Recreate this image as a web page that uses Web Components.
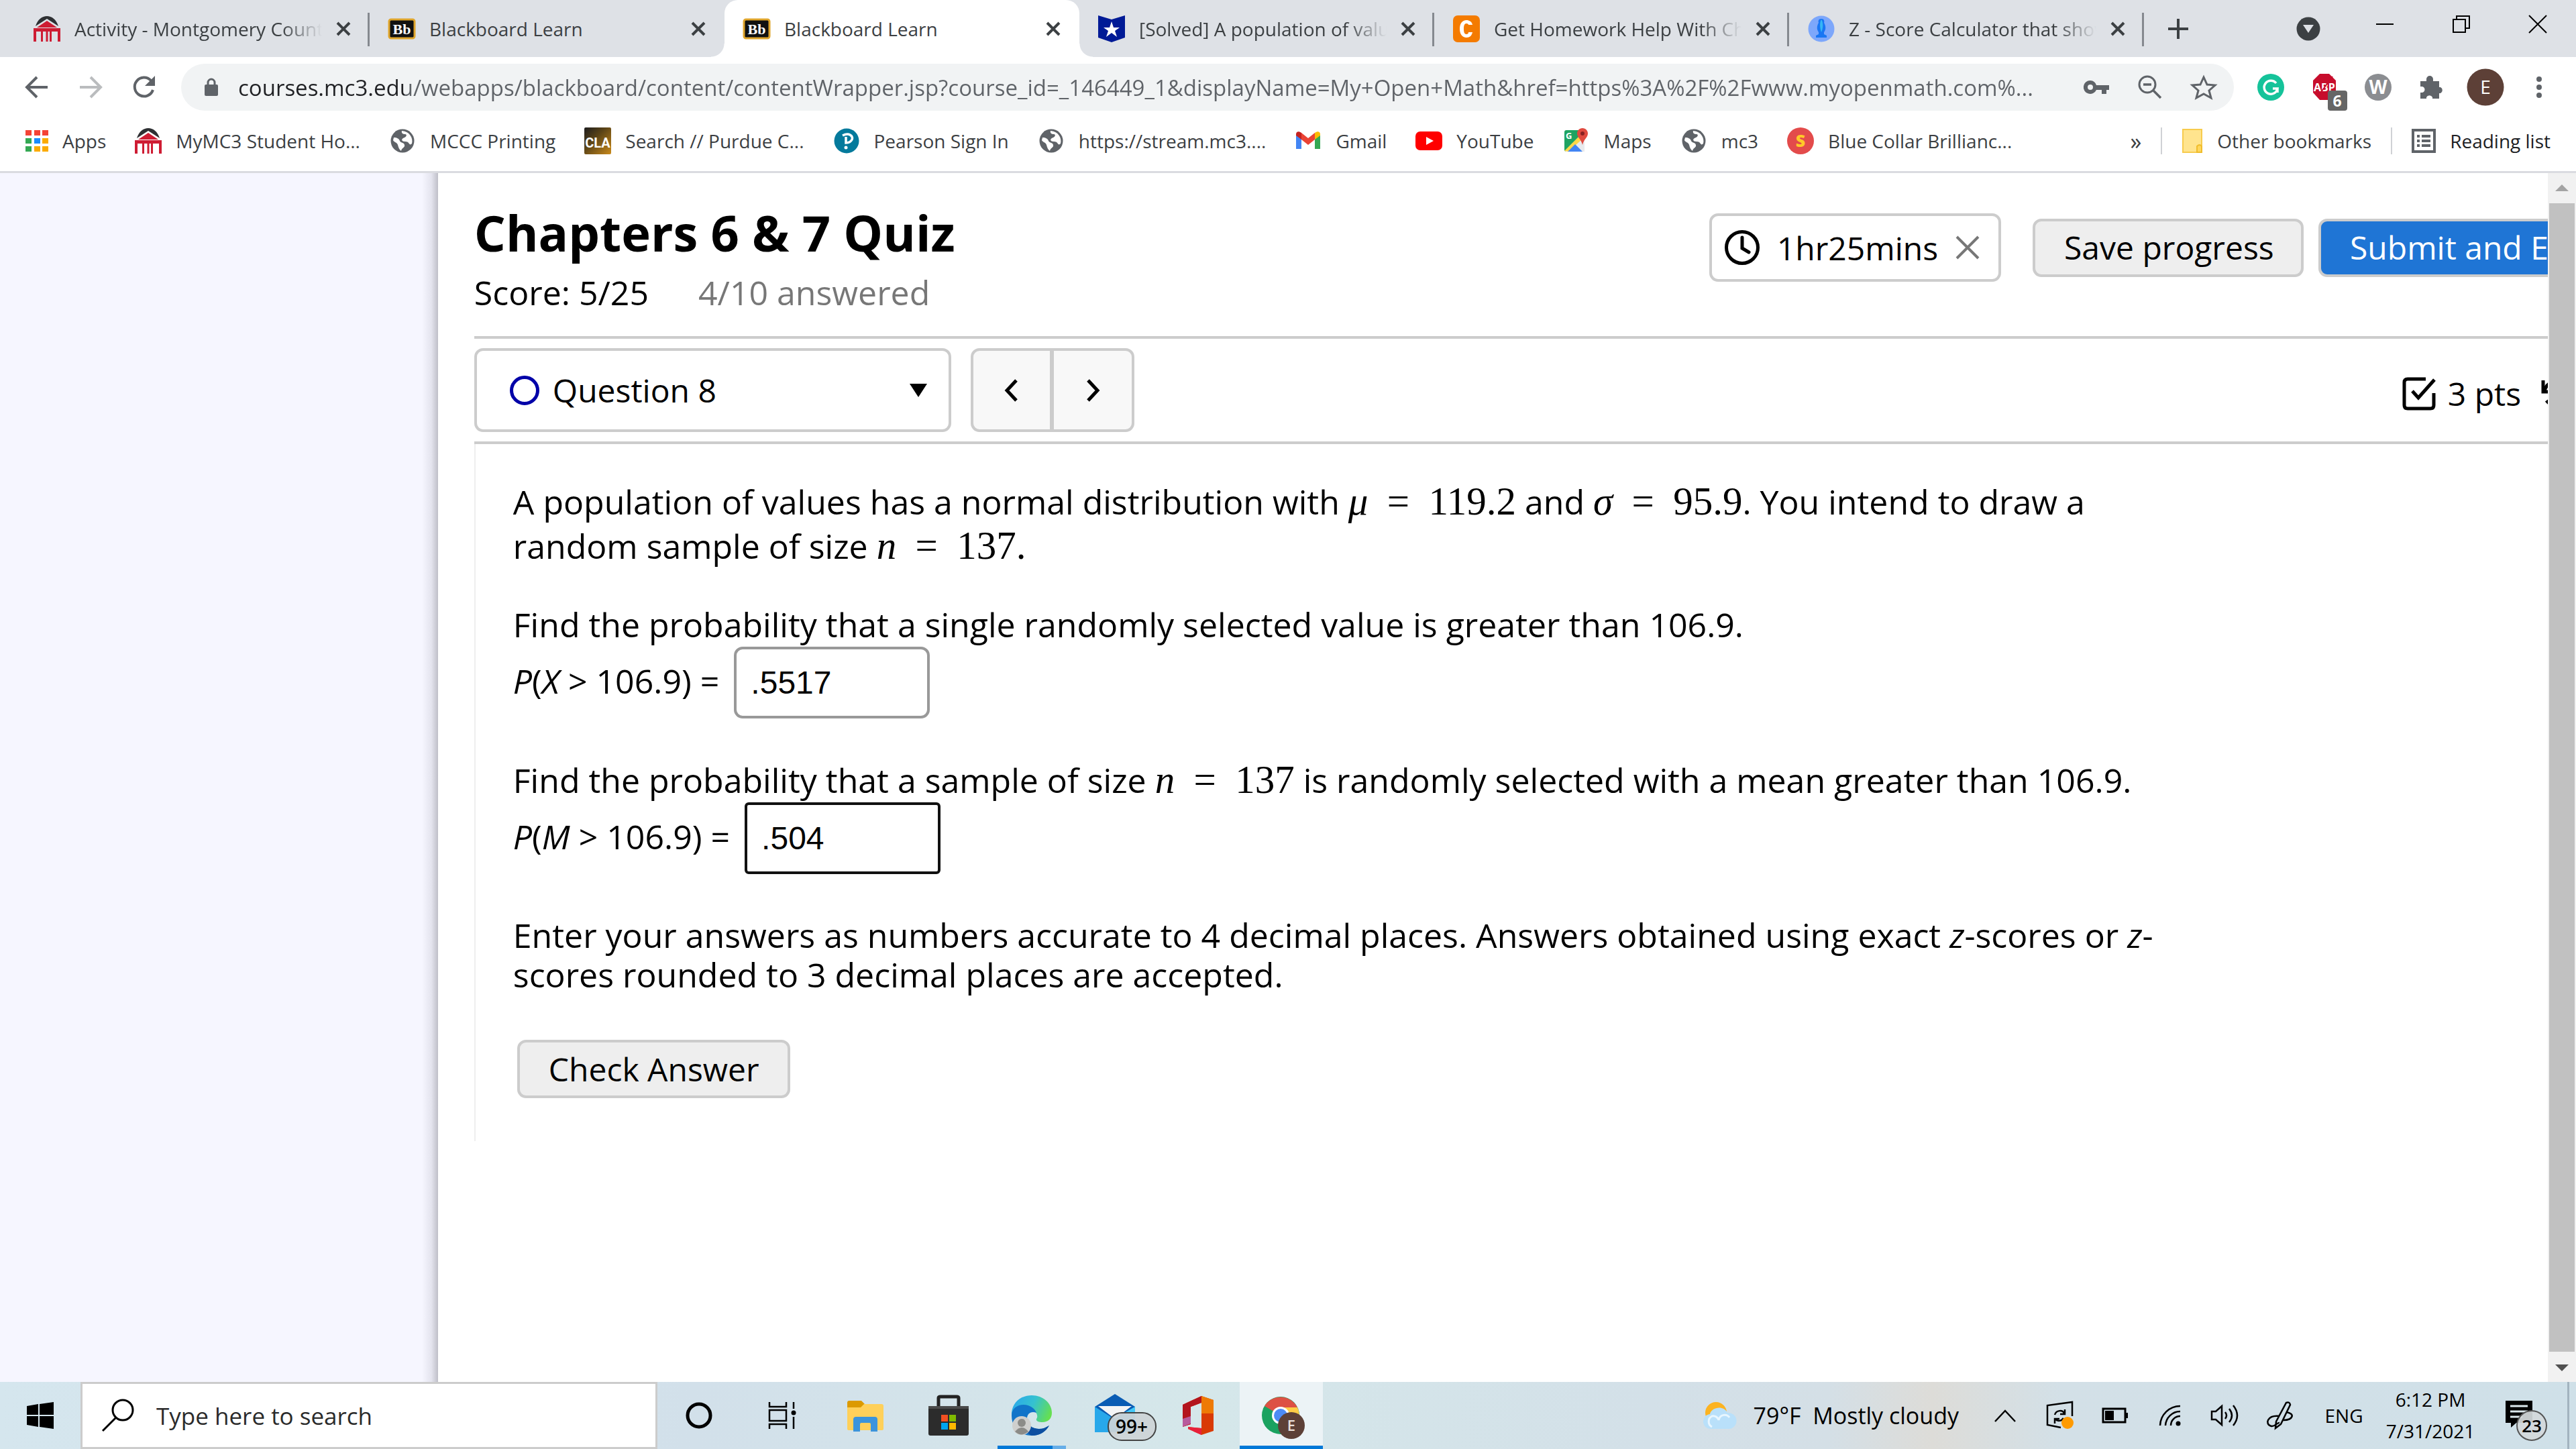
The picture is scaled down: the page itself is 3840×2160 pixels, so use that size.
<!DOCTYPE html>
<html lang="en">
<head>
<meta charset="utf-8">
<title>Blackboard Learn</title>
<style>
  html, body { margin: 0; height: 100%; }
  body { font-family: "Open Sans", "Noto Sans", sans-serif; font-size: 28px; color: #3c4043; background: #fff; overflow: hidden; }
</style>
</head>
<body>
<desktop-screen></desktop-screen>
<script>
const define = (name, css, html) => {
  const tpl = document.createElement('template');
  tpl.innerHTML = `<style>
    :host, *, *::before, *::after { box-sizing: border-box; }
    button, input, select { font: inherit; color: inherit; background: none; border: 0; margin: 0; padding: 0; outline: 0; }
    a { color: inherit; text-decoration: none; }
    ${css}</style>${html}`;
  customElements.define(name, class extends HTMLElement {
    constructor() {
      super();
      this.attachShadow({ mode: 'open' }).append(tpl.content.cloneNode(true));
    }
  });
};

/* Each entry: [width, height, drawing] */
const globe = `<circle cx="20" cy="20" r="17.500" fill="#5f6368"/><path d="M7 15c5 0 8 2 9 5s6 2 7 6-4 4-5 9c-3-2-4-5-5-9s-6-4-7-7zM19 5c-1 4 2 5 5 5s2 4-1 5-5 3-3 5 7 0 9 3 3 3 5 1c2-8-3-18-15-19z" fill="#fff"/>`;
const house = `<path d="M3 16C6 6 13 1 20 1s14 5 17 15L20 5z" fill="#2e3033"/><path d="M20 8 35 18H5z" fill="#ce1c33"/><path d="M0 19h40v20h-4V24H27v15h-3V24h-2.500v15h-3V24H14v15h-3V24H4v15H0z" fill="#ce1c33"/>`;
const bb = `<rect x="1" y="6" width="38" height="28" rx="3" fill="#111" stroke="#dfa52c" stroke-width="3"/><text x="20" y="28" text-anchor="middle" font-family="Liberation Serif" font-weight="700" font-size="22" fill="#fff">Bb</text>`;
const ICONS = {
  house: [40, 40, house],
  bb: [40, 40, bb],
  shield: [40, 40, `<path d="M0 0 20 6 40 0V33L20 40 0 33z" fill="#001a96"/><path d="m20 9 3 9h9l-7 5 3 9-8-6-8 6 3-9-7-5h9z" fill="#fff"/>`],
  chegg: [40, 40, `<rect width="40" height="40" rx="7" fill="#f47b00"/><path d="M29 14c-1-5-5-7-9-7-6 0-10 5-10 13s4 13 10 13c5 0 8-3 9-8h-6c0 2-1 3-3 3-3 0-4-3-4-8s1-8 4-8c2 0 3 1 3 2z" fill="#fff"/>`],
  bell: [40, 40, `<circle cx="20" cy="20" r="19.500" fill="#7da7fb"/><path d="M20 5c4 0 5 3 4 6 3 5 3 10 0 14v3l4 2v3H12v-3l4-2v-3c-3-4-3-9 0-14-1-3 0-6 4-6z" fill="#1976f3"/><path d="M20 6c3 4 3 13 0 19-2-6-3-14 0-19z" fill="#35b7f5"/>`],
  close: [22, 22, `<path d="M2 2 20 20M20 2 2 20" stroke="#3c4043" stroke-width="4"/>`],
  plus: [32, 32, `<path d="M16 1V31M1 16H31" stroke="#3c4043" stroke-width="4"/>`],
  drop: [36, 36, `<circle cx="18" cy="18" r="17.500" fill="#3c4043"/><path d="M10 12h16l-8 12z" fill="#dee1e6"/>`],
  minimize: [26, 26, `<path d="M0 13h26" stroke="#000" stroke-width="2"/>`],
  restore: [28, 28, `<path d="M2 7h18v19H2zM7 7V2h19v18h-6" fill="none" stroke="#000" stroke-width="2"/>`],
  quit: [28, 28, `<path d="M1 1 27 27M27 1 1 27" stroke="#000" stroke-width="2"/>`],
  back: [34, 34, `<path d="M33 17H3M17 2 2 17l15 15" fill="none" stroke="#5f6368" stroke-width="4"/>`],
  forward: [34, 34, `<path d="M1 17h30M17 2l15 15-15 15" fill="none" stroke="#babcbe" stroke-width="4"/>`],
  reload: [36, 36, `<path d="M31 22A14 14 0 1 1 28 8l3 4" fill="none" stroke="#5f6368" stroke-width="4"/><path d="M34 1v15H19z" fill="#5f6368"/>`],
  lock: [22, 28, `<rect x="1" y="10" width="20" height="17" rx="2" fill="#5f6368"/><path d="M6 11V7a5 5 0 0 1 10 0v4" fill="none" stroke="#5f6368" stroke-width="3"/>`],
  key: [38, 22, `<path fill-rule="evenodd" d="M10 1a10 10 0 1 0 9 14h8v6h7v-6h4V8H19A10 10 0 0 0 10 1zm0 6a4 4 0 1 1 0 8 4 4 0 0 1 0-8z" fill="#5f6368"/>`],
  zoom: [36, 36, `<circle cx="14" cy="14" r="12" fill="none" stroke="#5f6368" stroke-width="3"/><path d="M8 14h12M22 22 34 34" stroke="#5f6368" stroke-width="3.500"/>`],
  star: [38, 36, `<path d="m19 3 5 11 12 1-9 8 3 11-11-6-11 6 3-11-9-8 12-1z" fill="none" stroke="#5f6368" stroke-width="3"/>`],
  grammarly: [40, 40, `<circle cx="20" cy="20" r="20" fill="#15c39a"/><path d="M28 14a10 10 0 1 0 2 8h-7M30 22v6" fill="none" stroke="#fff" stroke-width="3.500"/>`],
  adblock: [52, 56, `<path d="M11 0h14l10 10v18L25 39H11L1 28V10z" fill="#c70d2c"/><text x="18" y="26" text-anchor="middle" font-family="Open Sans" font-weight="700" font-size="16" fill="#fff">ABP</text><path d="M8 34 30 4" stroke="#c70d2c" stroke-width="2"/><rect x="23" y="25" width="29" height="30" rx="4" fill="#666"/><text x="37" y="49" text-anchor="middle" font-family="Open Sans" font-weight="700" font-size="23" fill="#fff">6</text>`],
  wiki: [40, 40, `<circle cx="20" cy="20" r="20" fill="#8b8d91"/><text x="20" y="30" text-anchor="middle" font-family="Open Sans" font-weight="700" font-size="28" fill="#fff">W</text>`],
  puzzle: [36, 36, `<path d="M1 9h9V6a5 5 0 0 1 10 0v3h9v9h2a5 5 0 0 1 0 9h-2v8H19v-2a5 5 0 0 0-9 0v2H1V26h2a4 4 0 0 0 0-9H1z" fill="#5f6368"/>`],
  avatar: [56, 56, `<circle cx="28" cy="28" r="27.500" fill="#5d4037"/><text x="28" y="38" text-anchor="middle" font-family="Open Sans" font-size="28" fill="#fff">E</text>`],
  dots: [10, 34, `<circle cx="5" cy="5" r="4" fill="#5f6368"/><circle cx="5" cy="17" r="4" fill="#5f6368"/><circle cx="5" cy="29" r="4" fill="#5f6368"/>`],
  apps: [34, 34, `<path d="M0 1h9v8H0zM13 1h9v8h-9zM25 1h9v8h-9z" fill="#f44336"/><path d="M0 13h9v8H0zM0 25h9v8H0z" fill="#34a853"/><path d="M13 13h9v8h-9z" fill="#1a8cff"/><path d="M25 13h9v8h-9zM13 25h9v8h-9zM25 25h9v8h-9z" fill="#fbab00"/>`],
  globe: [40, 40, globe],
  cla: [40, 40, `<defs><linearGradient id="g" x1="0" y1="0" x2="1" y2="1"><stop offset="0" stop-color="#1d1d1f"/><stop offset=".4" stop-color="#5a4317"/><stop offset="1" stop-color="#c98a1b"/></linearGradient></defs><rect width="40" height="40" rx="2" fill="url(#g)"/><text x="20" y="30" text-anchor="middle" font-family="Roboto" font-weight="700" font-size="20" fill="#fff">CLA</text>`],
  pearson: [40, 40, `<circle cx="20" cy="20" r="18.500" fill="#047a9c"/><path d="M14 12c10-5 16 1 14 6-2 4-6 5-9 5V14" fill="none" stroke="#fff" stroke-width="3.500"/><circle cx="19" cy="30" r="2.500" fill="#fff"/>`],
  gmail: [40, 40, `<path d="M2 10v22h8V17z" fill="#4285f4"/><path d="M38 10v22h-8V17z" fill="#34a853"/><path d="M10 18V8l10 8 10-8v10l-10 8z" fill="#ea4335"/><path d="M2 10c0-4 4-5 8-2v10l-8-6z" fill="#c5221f"/><path d="M38 10c0-4-4-5-8-2v10l8-6z" fill="#fbbc04"/>`],
  youtube: [40, 40, `<rect y="6" width="40" height="28" rx="7" fill="#f00"/><path d="m16 14 11 6-11 6z" fill="#fff"/>`],
  maps: [40, 40, `<rect x="3" y="4" width="30" height="32" rx="3" fill="#1ea362"/><path d="M4 36 33 8v28z" fill="#e8eaed"/><path d="m3 35 22-22 4 5L9 36z" fill="#ffd84a"/><path d="m8 36 11-11 11 11z" fill="#4285f4"/><path d="M30 1c5 0 8 4 8 8 0 6-6 8-8 17-2-9-8-11-8-17 0-4 3-8 8-8z" fill="#e04a3f"/><circle cx="30" cy="9" r="3" fill="#822"/><text x="5" y="17" font-family="Open Sans" font-weight="700" font-size="13" fill="#fff">G</text>`],
  smore: [40, 40, `<circle cx="20" cy="20" r="20" fill="#e34b4b"/><text x="20" y="29" text-anchor="middle" font-family="Open Sans" font-weight="800" font-size="25" fill="#ffc928">S</text>`],
  folder: [32, 36, `<path d="M2 1h28v26l-3 8H2z" fill="#ffe48e" stroke="#f7cb4d" stroke-width="2"/><path d="M23 35V26q4-4 7 0v9z" fill="#ffd75e" stroke="#f0bd2c" stroke-width="2"/>`],
  list: [36, 36, `<rect x="2" y="2" width="32" height="32" fill="none" stroke="#5f6368" stroke-width="4"/><path d="M8 11h4M8 18h4M8 25h4M15 11h13M15 18h13M15 25h13" stroke="#5f6368" stroke-width="4"/>`],
  clock: [52, 52, `<circle cx="26" cy="26" r="23.500" fill="none" stroke="#000" stroke-width="5"/><path d="M26 11V27l10 6" fill="none" stroke="#000" stroke-width="5" stroke-linecap="round"/>`],
  dismiss: [36, 36, `<path d="M2 2 34 34M34 2 2 34" stroke="#777" stroke-width="4"/>`],
  ring: [44, 44, `<circle cx="22" cy="22" r="19.500" fill="none" stroke="#0000a8" stroke-width="5"/>`],
  caret: [28, 20, `<path d="M1 0h26L14 20z" fill="#000"/>`],
  prev: [24, 36, `<path d="M19 3 5 18l14 15" fill="none" stroke="#000" stroke-width="5"/>`],
  next: [24, 36, `<path d="m5 3 14 15L5 33" fill="none" stroke="#000" stroke-width="5"/>`],
  checkbox: [50, 50, `<path d="M35 3H8q-5 0-5 5v34q0 5 5 5h34q5 0 5-5V24" fill="none" stroke="#000" stroke-width="5"/><path d="m15 21 9 10L48 4" fill="none" stroke="#000" stroke-width="5"/>`],
  undo: [44, 44, `<path d="M3 2v17h17" fill="none" stroke="#000" stroke-width="5"/><path d="M5 18A18 18 0 1 1 8 32" fill="none" stroke="#000" stroke-width="5"/>`],
  up: [20, 10, `<path d="M0 10 10 0l10 10z" fill="#a3a3a3"/>`],
  down: [20, 10, `<path d="m0 0 10 10L20 0z" fill="#505050"/>`],
  windows: [40, 40, `<path d="M0 6 17 3v16H0zM19 3l21-3v19H19zM0 21h17v16L0 34zM19 21h21v19l-21-3z" fill="#000"/>`],
  search: [50, 50, `<circle cx="31" cy="17" r="15" fill="none" stroke="#000" stroke-width="3"/><path d="M21 28 1 48" stroke="#000" stroke-width="3"/>`],
  cortana: [40, 40, `<circle cx="20" cy="20" r="17" fill="none" stroke="#000" stroke-width="5"/>`],
  taskview: [42, 40, `<path d="M2 0v7h25V0M2 12h25v16H2zM2 40v-7h25v7M38 0v10M38 22v18" fill="none" stroke="#000" stroke-width="2.500"/><circle cx="38" cy="16" r="3.500"/>`],
  explorer: [54, 48, `<path d="M0 5q0-3 3-3h18l5 5-3 6H0z" fill="#dc9a00"/><path d="M0 12h20l5-5h26q3 0 3 3v34q0 2-3 2H3q-3 0-3-2z" fill="#ffd05a"/><path d="M9 48V30q0-4 4-4h28q4 0 4 4v18H35V37q0-2-2-2H21q-2 0-2 2v11z" fill="#3b94dc"/>`],
  store: [60, 60, `<path d="M15 20V4q0-2 3-2h24q3 0 3 2v16" fill="none" stroke="#222" stroke-width="5"/><path d="M0 16h60v41q0 3-3 3H3q-3 0-3-3z" fill="#2c2c2c"/><path d="M0 16h60v4H0z" fill="#4a4a4a"/><path d="M19 29h10v10H19z" fill="#f25022"/><path d="M31 29h10v10H31z" fill="#7fba00"/><path d="M19 41h10v10H19z" fill="#00a4ef"/><path d="M31 41h10v10H31z" fill="#ffb900"/>`],
  edge: [60, 60, `<defs><linearGradient id="a" x1="0" x2="1" y1=".3" y2=".6"><stop offset="0" stop-color="#2aa9ea"/><stop offset=".5" stop-color="#35c1d0"/><stop offset="1" stop-color="#66e04f"/></linearGradient></defs><path d="M0 26C2 8 16 0 30 0c17 0 30 12 30 26 0 9-6 14-14 14-6 0-10-2-9-5 4-5-2-15-12-15-12-1-22 4-25 12z" fill="url(#a)"/><path d="M0 30c0-10 8-16 18-16 9 0 17 6 19 12-9-3-14 2-14 9 0 10 9 15 18 15 6 0 10-2 15-5-5 9-14 15-26 15C12 60 0 48 0 30z" fill="#1174c9"/><path d="M23 35c0 10 9 15 18 15 6 0 10-2 15-5-5 9-14 15-26 15 -10-4-14-18-7-25z" fill="#0d4fa0"/><circle cx="15" cy="45" r="14" fill="#cfcfcd"/><circle cx="15" cy="41" r="6" fill="#8b8b88"/><path d="M5 54q10-12 20 0-10 9-20 0z" fill="#8b8b88"/>`],
  mail: [92, 72, `<path d="M0 20 30 1 60 20v38H0z" fill="#0a5cb4"/><path d="M5 19h50L30 38z" fill="#f4f5f6"/><path d="M0 20l60 38H0z" fill="#28a8ea"/><path d="M60 20 28 38l32 20z" fill="#44c8f7"/><rect x="20" y="29" width="71" height="41" rx="20" fill="#cdd3d6" fill-opacity=".93" stroke="#444" stroke-width="2"/><text x="55" y="60" text-anchor="middle" font-family="Open Sans" font-weight="600" font-size="28" fill="#000">99+</text>`],
  office: [46, 58, `<path d="M28 0 46 6v46l-18 6-20-9V46l20 2V10L12 16v26L0 46V13z" fill="#d93a05"/><path d="M28 0v10L12 16v26L0 46V13z" fill="#b3141d"/><path d="M0 34v12l12-5V30z" fill="#b85a9c"/><path d="m8 46 20 2v10l-20-9z" fill="#e8203a"/><path d="m28 0 18 6v20H28z" fill="#ee7a05"/>`],
  chrome: [64, 64, `<circle cx="28" cy="29" r="28" fill="#1aa260"/><path d="M28 29 4 15A28 28 0 0 1 53 17H28z" fill="#dd5144"/><path d="M28 17h25a28 28 0 0 1-22 40l9-21z" fill="#ffcd46"/><circle cx="28" cy="29" r="13" fill="#fff"/><circle cx="28" cy="29" r="10" fill="#4c8bf5"/><circle cx="44" cy="44" r="20" fill="#5d4037"/><text x="44" y="52" text-anchor="middle" font-family="Open Sans" font-weight="600" font-size="22" fill="#e9dfda">E</text>`],
  weather: [52, 42, `<circle cx="19" cy="17" r="16" fill="#fcb321"/><path d="M12 41a11 11 0 0 1-2-22c2-10 20-14 26-2a12 12 0 0 1 3 24z" fill="#b9e0fa"/><path d="M13 38a9 9 0 0 1 0-16c5-1 9 2 10 6 2-9 12-10 16-4" fill="none" stroke="#e8f6ff" stroke-width="3"/>`],
  chevron: [32, 20, `<path d="m1 19 15-16 15 16" fill="none" stroke="#000" stroke-width="2.500"/>`],
  sync: [42, 42, `<path d="M39 22V1L2 6v29l20 4" fill="none" stroke="#000" stroke-width="2.500"/><path d="M13 20c2-7 12-8 14-2m1-6v7h-7M26 25c-3 5-10 5-12 1m-1 7v-7h7" fill="none" stroke="#000" stroke-width="2.500"/><circle cx="32" cy="32" r="9" fill="#ff9a00"/>`],
  battery: [40, 24, `<path d="M2 2h33v20H2z" fill="none" stroke="#000" stroke-width="3"/><path d="M5 5h13v14H5zM36 8h3v8h-3z"/>`],
  wifi: [34, 34, `<path d="M2 32A30 30 0 0 1 32 3M10 32a22 22 0 0 1 22-21M18 32a14 14 0 0 1 14-14" fill="none" stroke="#000" stroke-width="2.500"/><circle cx="29" cy="29" r="3.500"/>`],
  sound: [44, 38, `<path d="M2 13h6l9-8v28l-9-8H2zM22 14q4 5 0 10M28 9q8 10 0 20M34 4q12 15 0 30" fill="none" stroke="#000" stroke-width="2.500"/>`],
  pen: [42, 42, `<path d="M15 30 30 2q5-2 6 3L22 34l-8 6zM20 22C2 20-3 34 8 37c6 1 8-6 12-5M30 16c14 2 10 12-4 12" fill="none" stroke="#000" stroke-width="2.500"/>`],
  notice: [66, 62, `<path d="M0 1h40v33H16l-8 7v-7H0z"/><path d="M7 9h26M7 17h26M7 25h18" stroke="#dbe7ec" stroke-width="3"/><circle cx="39" cy="38" r="22" fill="#d3d8da" fill-opacity=".93" stroke="#555" stroke-width="2"/><text x="39" y="48" text-anchor="middle" font-family="Open Sans" font-weight="600" font-size="26" fill="#000">23</text>`],
};

customElements.define('ui-icon', class extends HTMLElement {
  constructor() { super(); this.attachShadow({ mode: 'open' }); }
  connectedCallback() {
    const [w, h, art] = ICONS[this.getAttribute('name')];
    this.shadowRoot.innerHTML = `<style>:host{display:block;flex:none}svg{display:block;overflow:visible}</style><svg width="${w}" height="${h}" viewBox="0 0 ${w} ${h}" aria-hidden="true">${art}</svg>`;
  }
});

define('browser-tab', `
  :host { display: flex; flex: 0 0 529px; min-width: 0; height: 85px; align-items: center; padding: 0 19px 0 28px; position: relative; color: #3c4043; }
  :host([divided])::after { content: ""; position: absolute; right: 0; top: 19px; width: 3px; height: 50px; background: #85898f; }
  :host([active]) { background: #fff; border-radius: 20px 20px 0 0; }
  :host([active])::before, :host([active])::after { content: ""; position: absolute; bottom: 0; width: 20px; height: 20px; }
  :host([active])::before { left: -20px; background: radial-gradient(circle at 0 0, transparent 19px, #fff 20px); }
  :host([active])::after { right: -20px; background: radial-gradient(circle at 100% 0, transparent 19px, #fff 20px); }
  .title { flex: 1; min-width: 0; margin-left: 21px; overflow: hidden; white-space: nowrap; text-align: left; line-height: 44px; }
  :host([faded]) .title { -webkit-mask-image: linear-gradient(to right, #000 calc(100% - 60px), transparent); mask-image: linear-gradient(to right, #000 calc(100% - 60px), transparent); }
  .close { flex: none; width: 40px; height: 40px; margin-left: 12px; display: grid; place-items: center; }
`, `<slot name="icon"></slot><button class="title"><slot></slot></button><button class="close" aria-label="Close tab"><ui-icon name="close"></ui-icon></button>`);

define('tab-strip', `
  :host { display: flex; flex: none; align-items: center; height: 85px; padding-left: 22px; background: #dee1e6; }
  nav { display: flex; flex: none; }
  .add { display: grid; place-items: center; width: 102px; height: 85px; }
  .window { display: flex; margin-left: auto; align-items: center; height: 85px; }
  .window button { width: 114px; height: 72px; align-self: start; display: grid; place-items: center; }
  .window .menu { height: 85px; }
`, `<nav>
  <browser-tab divided faded><ui-icon slot="icon" name="house"></ui-icon>Activity - Montgomery County</browser-tab>
  <browser-tab><ui-icon slot="icon" name="bb"></ui-icon>Blackboard Learn</browser-tab>
  <browser-tab active><ui-icon slot="icon" name="bb"></ui-icon>Blackboard Learn</browser-tab>
  <browser-tab divided faded><ui-icon slot="icon" name="shield"></ui-icon>[Solved] A population of values</browser-tab>
  <browser-tab divided faded><ui-icon slot="icon" name="chegg"></ui-icon>Get Homework Help With Chegg</browser-tab>
  <browser-tab divided faded><ui-icon slot="icon" name="bell"></ui-icon>Z - Score Calculator that shows</browser-tab>
</nav>
<button class="add" aria-label="New tab"><ui-icon name="plus"></ui-icon></button>
<div class="window">
  <button class="menu" aria-label="Tab search"><ui-icon name="drop"></ui-icon></button>
  <button aria-label="Minimize"><ui-icon name="minimize"></ui-icon></button>
  <button aria-label="Restore"><ui-icon name="restore"></ui-icon></button>
  <button aria-label="Close"><ui-icon name="quit"></ui-icon></button>
</div>`);

define('tool-bar', `
  :host { display: flex; flex: none; align-items: center; height: 90px; padding-left: 15px; }
  button { width: 80px; height: 70px; display: grid; place-items: center; flex: none; }
  .omnibox { display: flex; align-items: center; flex: 1; height: 70px; margin-left: 15px; padding: 0 5px 0 34px; background: #f1f3f4; border-radius: 35px; }
  input { flex: 1; min-width: 0; height: 60px; margin-left: 29px; font-size: 33px; color: #5f6368;
    background: linear-gradient(to right, #202124 248px, #5f6368 248px) text; -webkit-text-fill-color: transparent; }
  .ext { display: flex; margin-left: 15px; padding-right: 15px; }
  .badged { place-items: start; padding: 15px 0 0 22px; }
`, `<button aria-label="Back"><ui-icon name="back"></ui-icon></button>
<button aria-label="Forward"><ui-icon name="forward"></ui-icon></button>
<button aria-label="Reload"><ui-icon name="reload"></ui-icon></button>
<div class="omnibox"><ui-icon name="lock"></ui-icon>
  <input aria-label="Address" value="courses.mc3.edu/webapps/blackboard/content/contentWrapper.jsp?course_id=_146449_1&amp;displayName=My+Open+Math&amp;href=https%3A%2F%2Fwww.myopenmath.com%...">
  <button aria-label="Passwords"><ui-icon name="key"></ui-icon></button>
  <button aria-label="Zoom"><ui-icon name="zoom"></ui-icon></button>
  <button aria-label="Bookmark this tab"><ui-icon name="star"></ui-icon></button>
</div>
<div class="ext">
  <button aria-label="Grammarly"><ui-icon name="grammarly"></ui-icon></button>
  <button class="badged" aria-label="Adblock"><ui-icon name="adblock"></ui-icon></button>
  <button aria-label="Wikiwand"><ui-icon name="wiki"></ui-icon></button>
  <button aria-label="Extensions"><ui-icon name="puzzle"></ui-icon></button>
  <button aria-label="Profile"><ui-icon name="avatar"></ui-icon></button>
  <button aria-label="Menu"><ui-icon name="dots"></ui-icon></button>
</div>`);

define('book-mark', `
  :host { display: block; flex: none; }
  a { display: flex; align-items: center; gap: 21px; line-height: 44px; white-space: nowrap; }
`, `<a href="#"><slot name="icon"></slot><slot></slot></a>`);

define('bookmarks-bar', `
  :host { display: flex; flex: none; align-items: center; height: 83px; padding: 0 38px 10px; gap: 43px; border-bottom: 3px solid #dadbe0; }
  .right { display: flex; align-items: center; margin-left: auto; gap: 29px; }
  .more { font-size: 34px; line-height: 40px; }
  i { width: 2px; height: 40px; background: #cfd1d5; }
  .reading { color: #202124; }
`, `
<book-mark><ui-icon slot="icon" name="apps"></ui-icon>Apps</book-mark>
<book-mark><ui-icon slot="icon" name="house"></ui-icon>MyMC3 Student Ho...</book-mark>
<book-mark><ui-icon slot="icon" name="globe"></ui-icon>MCCC Printing</book-mark>
<book-mark><ui-icon slot="icon" name="cla"></ui-icon>Search // Purdue C...</book-mark>
<book-mark><ui-icon slot="icon" name="pearson"></ui-icon>Pearson Sign In</book-mark>
<book-mark><ui-icon slot="icon" name="globe"></ui-icon>https://stream.mc3....</book-mark>
<book-mark><ui-icon slot="icon" name="gmail"></ui-icon>Gmail</book-mark>
<book-mark><ui-icon slot="icon" name="youtube"></ui-icon>YouTube</book-mark>
<book-mark><ui-icon slot="icon" name="maps"></ui-icon>Maps</book-mark>
<book-mark><ui-icon slot="icon" name="globe"></ui-icon>mc3</book-mark>
<book-mark><ui-icon slot="icon" name="smore"></ui-icon>Blue Collar Brillianc...</book-mark>
<div class="right"><button class="more" aria-label="More bookmarks">»</button><i></i>
<book-mark><ui-icon slot="icon" name="folder"></ui-icon>Other bookmarks</book-mark><i></i>
<book-mark class="reading"><ui-icon slot="icon" name="list"></ui-icon>Reading list</book-mark></div>`);

define('plain-button', `
  :host { display: block; flex: none; font-size: 48px; }
  button { display: block; width: 100%; height: 87px; padding: 0 43px; border: 4px solid #ccc; border-radius: 13px; background: var(--fill, #eee); color: var(--ink, #000); white-space: nowrap; line-height: 60px; }
`, `<button><slot></slot></button>`);

define('quiz-header', `
  :host { display: flex; align-items: flex-start; height: 247px; padding: 44px 0 0; border-bottom: 4px solid #ccc; }
  h1 { margin: 0 0 14px; font-size: 74px; line-height: 90px; font-weight: 700; }
  p { margin: 0; font-size: 50px; line-height: 60px; display: flex; gap: 74px; }
  p span + span { color: #777; }
  .actions { display: flex; align-items: center; margin: 16px 0 0 auto; }
  .timer { display: flex; align-items: center; width: 435px; height: 102px; padding: 0 28px 0 19px; border: 4px solid #ccc; border-radius: 13px; margin-right: 47px; }
  .timer span { margin: 0 auto; }
  .save { width: 404px; margin-right: 22px; }
  .submit { width: 442px; --fill: #1f75d5; --ink: #fff; }
`, `<div><h1>Chapters 6 &amp; 7 Quiz</h1><p><span>Score: 5/25</span><span>4/10 answered</span></p></div>
<div class="actions">
  <div class="timer"><ui-icon name="clock"></ui-icon><span>1hr25mins</span><button aria-label="Hide timer"><ui-icon name="dismiss"></ui-icon></button></div>
  <plain-button class="save">Save progress</plain-button>
  <plain-button class="submit">Submit and End</plain-button>
</div>`);

define('question-nav', `
  :host { display: flex; align-items: center; padding: 14px 66px 14px 0; border-bottom: 4px solid #ccc; }
  .pick { display: flex; align-items: center; width: 711px; height: 125px; padding: 0 31px 0 49px; border: 4px solid #ccc; border-radius: 13px; gap: 20px; }
  select { appearance: none; flex: 1; height: 80px; }
  .steps { display: flex; margin-left: 29px; }
  .steps button { width: 122px; height: 125px; border: 4px solid #ccc; background: #f8f8f8; display: grid; place-items: center; }
  .steps button:first-child { border-radius: 13px 0 0 13px; }
  .steps button:last-child { border-radius: 0 13px 13px 0; border-left-width: 2px; }
  .points { display: flex; align-items: center; margin-left: auto; gap: 18px; padding-top: 10px; }
  .points span { margin-right: 12px; line-height: 60px; }
`, `<label class="pick"><ui-icon name="ring"></ui-icon><select aria-label="Question"><option>Question 8</option></select><ui-icon name="caret"></ui-icon></label>
<div class="steps"><button aria-label="Previous question"><ui-icon name="prev"></ui-icon></button><button aria-label="Next question"><ui-icon name="next"></ui-icon></button></div>
<div class="points"><ui-icon name="checkbox"></ui-icon><span>3 pts</span><ui-icon name="undo"></ui-icon></div>`);

define('math-eq', `
  :host { display: inline; font-family: "Liberation Serif", serif; font-size: 59px; line-height: 0; white-space: nowrap; }
  b { display: inline-block; width: 90px; text-align: center; font-weight: 400; line-height: 0; }
`, `<i><slot name="var"></slot></i><b>=</b><slot></slot>`);

define('answer-box', `
  :host { display: flex; align-items: baseline; gap: 22px; }
  input { width: 292px; height: 107px; padding: 0 21px; border: 4px solid #999; border-radius: 13px; font-family: "Liberation Sans", sans-serif; font-size: 48px; background: #fff; }
  :host([focused]) input { border-color: #111; border-radius: 6px; }
`, `<label for="a"><slot></slot></label><input id="a">`);

define('question-body', `
  :host { display: block; padding: 53px 0 64px 56px; border-left: 2px solid #eee; font-size: 50px; }
  p { margin: 0; line-height: 66px; white-space: nowrap; }
  .find { margin-top: 51px; }
  .find.second { margin-top: 59px; }
  .note { margin-top: 62px; line-height: 59px; }
  .check { width: 407px; margin: 67px 0 0 6px; }
`, `
<p>A population of values has a normal distribution with <math-eq><span slot="var">μ</span>119.2</math-eq> and <math-eq><span slot="var">σ</span>95.9</math-eq>. You intend to draw a<br>random sample of size <math-eq><span slot="var">n</span>137.</math-eq></p>
<p class="find">Find the probability that a single randomly selected value is greater than 106.9.</p>
<answer-box value=".5517"><i>P</i>(<i>X</i> &gt; 106.9) =</answer-box>
<p class="find second">Find the probability that a sample of size <math-eq><span slot="var">n</span>137</math-eq> is randomly selected with a mean greater than 106.9.</p>
<answer-box focused value=".504"><i>P</i>(<i>M</i> &gt; 106.9) =</answer-box>
<p class="note">Enter your answers as numbers accurate to 4 decimal places. Answers obtained using exact <i>z</i>-scores or <i>z</i>-<br>scores rounded to 3 decimal places are accepted.</p>
<plain-button class="check">Check Answer</plain-button>`);

define('page-view', `
  :host { display: flex; flex: 1; min-height: 0; }
  aside { flex: 0 0 17%; background: linear-gradient(to left, #bfbfc8, #e4e4ee 10px, #f6f6ff 24px); }
  main { flex: 1; min-width: 0; overflow: hidden; padding-left: 54px; background: #fff; color: #000; font-size: 48px; }
  .quiz { margin-right: -100px; }
  .scroll { flex: 0 0 42px; display: flex; flex-direction: column; align-items: center; background: #f1f1f1; padding: 17px 0 16px; }
  .thumb { flex: 1; width: 38px; margin: 18px 0 19px; background: #c1c1c1; }
`, `<aside></aside>
<main><div class="quiz"><quiz-header></quiz-header><question-nav></question-nav><question-body></question-body></div></main>
<div class="scroll"><ui-icon name="up"></ui-icon><div class="thumb"></div><ui-icon name="down"></ui-icon></div>`);

define('task-bar', `
  :host { display: flex; flex: none; height: 100px; align-items: stretch; color: #000; background: linear-gradient(90deg, #d5e6ee, #d2e0ea 27%, #d5e7ea 47%, #d3e0e8 64%, #d4dfe6 71%, #dddcd8 75%, #d3e0e7 80%, #cfe0e8); }
  .start { width: 120px; display: grid; place-items: center; }
  .search { display: flex; align-items: center; width: 860px; padding: 0 29px; border: 3px solid #ccc; background: #fff; }
  .search input { flex: 1; min-width: 0; margin-left: 31px; font-size: 35px; height: 80px; }
  .search input::placeholder { color: #2b2b2b; opacity: 1; }
  .apps { display: flex; }
  .apps button { width: 124px; display: grid; place-items: center; position: relative; }
  .apps .mail { justify-items: start; padding: 6px 0 0 32px; }
  .apps .chromium { background: #ecf3f6; padding: 6px 0 0 6px; }
  .edge::after, .chromium::after { content: ""; position: absolute; left: 11px; right: 11px; bottom: 0; height: 5px; background: linear-gradient(to right, #0078d7 80%, #66aee8 80%); }
  .chromium::after { left: 0; right: 0; background: #0078d7; }
  .tray { display: flex; align-items: center; margin-left: auto; padding-right: 26px; }
  .tray button { display: grid; place-items: center; width: 82px; }
  .tray .weather { display: flex; width: auto; gap: 23px; font-size: 34px; white-space: pre; margin-right: 28px; }
  .tray .time { display: block; width: 136px; margin: 0 44px 0 30px; line-height: 47px; text-align: center; }
  .tray .lang { width: 62px; margin-left: 23px; }
  .tray .note { width: 66px; padding-top: 16px; }
  .peek { width: 13px; border-left: 3px solid #a3b4bf; }
`, `<button class="start" aria-label="Start"><ui-icon name="windows"></ui-icon></button>
<label class="search"><ui-icon name="search"></ui-icon><input placeholder="Type here to search" aria-label="Type here to search"></label>
<div class="apps">
  <button aria-label="Cortana"><ui-icon name="cortana"></ui-icon></button>
  <button aria-label="Task view"><ui-icon name="taskview"></ui-icon></button>
  <button aria-label="File Explorer"><ui-icon name="explorer"></ui-icon></button>
  <button aria-label="Store"><ui-icon name="store"></ui-icon></button>
  <button class="edge" aria-label="Edge"><ui-icon name="edge"></ui-icon></button>
  <button class="mail" aria-label="Mail"><ui-icon name="mail"></ui-icon></button>
  <button aria-label="Office"><ui-icon name="office"></ui-icon></button>
  <button class="chromium" aria-label="Chrome"><ui-icon name="chrome"></ui-icon></button>
</div>
<div class="tray">
  <button class="weather"><ui-icon name="weather"></ui-icon>79°F  Mostly cloudy</button>
  <button aria-label="Hidden icons"><ui-icon name="chevron"></ui-icon></button>
  <button aria-label="Updates"><ui-icon name="sync"></ui-icon></button>
  <button aria-label="Battery"><ui-icon name="battery"></ui-icon></button>
  <button aria-label="Network"><ui-icon name="wifi"></ui-icon></button>
  <button aria-label="Volume"><ui-icon name="sound"></ui-icon></button>
  <button aria-label="Pen"><ui-icon name="pen"></ui-icon></button>
  <button class="lang">ENG</button>
  <button class="time">6:12 PM<br>7/31/2021</button>
  <button class="note" aria-label="Notifications"><ui-icon name="notice"></ui-icon></button>
</div>
<div class="peek"></div>`);

define('desktop-frame', `:host { display: flex; flex-direction: column; height: 100vh; }`,
  `<tab-strip></tab-strip><tool-bar></tool-bar><bookmarks-bar></bookmarks-bar><page-view></page-view><task-bar></task-bar>`);

customElements.define('desktop-screen', class extends HTMLElement {
  constructor() {
    super();
    this.attachShadow({ mode: 'open' }).innerHTML = '<style>:host{display:block}</style><desktop-frame></desktop-frame>';
  }
  fill() {
    const walk = root => root.querySelectorAll('*').forEach(el => {
      if (el.localName === 'answer-box') el.shadowRoot.querySelector('input').value = el.getAttribute('value');
      if (el.shadowRoot) walk(el.shadowRoot);
    });
    walk(this.shadowRoot);
  }
});
document.querySelector('desktop-screen').fill();
</script>
</body>
</html>
